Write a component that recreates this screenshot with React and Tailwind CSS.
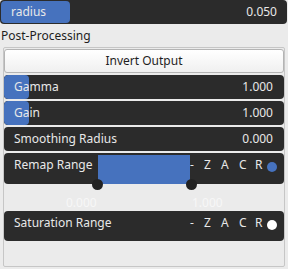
const font = { fontFamily: '"Noto Sans", "Open Sans", sans-serif' };

function SliderRow({ label, value, fill }) {
  return (
    <div className="relative h-[24px] rounded-[4px] bg-[#2b2b2b] overflow-hidden">
      {fill > 0 && (
        <div className="absolute left-0 top-0 bottom-0 rounded-[4px] bg-[#4672be]" style={{ width: fill }} />
      )}
      <div className="relative flex h-full items-center justify-between pl-[10px] pr-[11px] text-[12px] text-[#e8e8e8]">
        <span>{label}</span>
        <span>{value}</span>
      </div>
    </div>
  );
}

function Flags({ dot }) {
  return (
    <div className="flex items-center text-[12px] text-[#e8e8e8]">
      <span className="w-[14px]">-</span>
      <span className="w-[17px]">Z</span>
      <span className="w-[18px]">A</span>
      <span className="w-[16px]">C</span>
      <span className="w-[12px]">R</span>
      <span className={`mt-[4px] h-[10px] w-[10px] rounded-full ${dot}`} />
    </div>
  );
}

export default function App() {
  return (
    <div className="w-[288px] h-[269px] bg-[#ebebeb] overflow-hidden" style={font}>
      <div className="relative h-[24px] w-[287px] rounded-[4px] bg-[#2b2b2b]">
        <div className="absolute left-[1px] top-[1px] bottom-[1px] w-[69px] rounded-[4px] bg-[#4672be]" />
        <div className="relative flex h-full items-center justify-between pl-[11px] pr-[10px] text-[12px] text-[#e8e8e8]">
          <span>radius</span>
          <span>0.050</span>
        </div>
      </div>
      <div className="h-[23px] pl-[1px] flex items-center text-[12px] text-[#1e1e1e]">Post-Processing</div>
      <div className="mx-[3px] h-[220px] border border-[#c6c6c6] rounded-[2px] bg-[#ebebeb] pt-px px-0 flex flex-col">
        <div className="h-[24px] flex items-center justify-center rounded-[3px] border border-[#b4b4b4] bg-gradient-to-b from-[#ffffff] to-[#f0f0f0] text-[12px] text-[#1e1e1e]">
          Invert Output
        </div>
        <div className="mt-[2px] flex flex-col gap-[2px]">
          <SliderRow label="Gamma" value="1.000" fill={25} />
          <SliderRow label="Gain" value="1.000" fill={25} />
          <SliderRow label="Smoothing Radius" value="0.000" fill={0} />
        </div>
        <div className="relative mt-[2px] h-[31px] rounded-[4px] bg-[#2b2b2b]">
          <div className="absolute left-[94px] top-[2px] bottom-0 w-[92px] bg-[#4672be]" />
          <div className="relative flex h-[23px] items-center justify-between pl-[10px] pr-[7px] text-[12px] text-[#e8e8e8]">
            <span>Remap Range</span>
            <Flags dot="bg-[#4672be]" />
          </div>
          <div className="absolute left-[88px] top-[26px] h-[11px] w-[11px] rounded-full bg-[#222222]" />
          <div className="absolute left-[182px] top-[26px] h-[11px] w-[11px] rounded-full bg-[#222222]" />
        </div>
        <div className="relative h-[27px] text-[12px] text-[#f7f7f7]">
          <span className="absolute left-[62px] top-[10px]">0.000</span>
          <span className="absolute left-[188px] top-[10px]">1.000</span>
        </div>
        <div className="h-[30px] rounded-[4px] bg-[#2b2b2b]">
          <div className="flex h-[24px] items-center justify-between pl-[10px] pr-[7px] text-[12px] text-[#e8e8e8]">
            <span>Saturation Range</span>
            <Flags dot="bg-[#ffffff]" />
          </div>
        </div>
      </div>
    </div>
  );
}
